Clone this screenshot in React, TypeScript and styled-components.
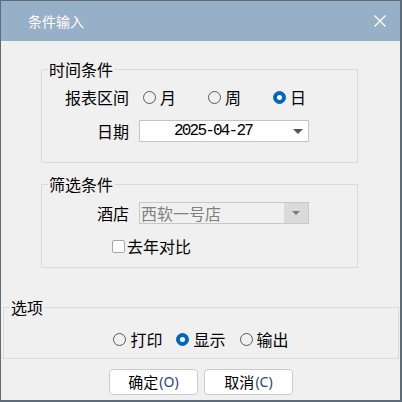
import React from 'react';
import styled, { createGlobalStyle } from 'styled-components';

const Global = createGlobalStyle`
  html, body { margin: 0; padding: 0; background: #f0f0f0; }
  body { font-family: "Noto Sans CJK SC", "Noto Sans", sans-serif; color: #000; }
  * { box-sizing: border-box; }
`;

const Window = styled.div`
  width: 402px;
  height: 402px;
  border-style: solid;
  border-color: #5e6b79;
  border-width: 1px 2px 2px 1px;
  background: #f0f0f0;
  display: flex;
  flex-direction: column;
`;

const TitleBar = styled.div`
  height: 40px;
  flex: none;
  background: #98afc8;
  display: flex;
  align-items: center;
  justify-content: space-between;
  padding: 0 14px 0 27px;
  color: #fff;
  font-size: 14px;
  line-height: 16px;
`;

const Body = styled.div`
  flex: 1;
  display: flex;
  flex-direction: column;
  padding-top: 28px;
`;

const Group = styled.div<{ $left: number; $width: number; $mt: number; $pt: number; $pb: number; $gap: number }>`
  position: relative;
  margin-left: ${(p) => p.$left}px;
  margin-top: ${(p) => p.$mt}px;
  width: ${(p) => p.$width}px;
  border: 1px solid #dadada;
  padding: ${(p) => p.$pt}px 0 ${(p) => p.$pb}px 0;
  display: flex;
  flex-direction: column;
  gap: ${(p) => p.$gap}px;
`;

const Legend = styled.span`
  position: absolute;
  top: -9px;
  left: 6px;
  padding: 0 1px;
  background: #f0f0f0;
  font-size: 16px;
  line-height: 16px;
`;

const FormRow = styled.div`
  display: grid;
  grid-template-columns: 87px auto;
  column-gap: 10px;
  align-items: center;
  height: 22px;
`;

const Label = styled.span`
  text-align: right;
  font-size: 16px;
  line-height: 22px;
`;

const RadioSet = styled.div<{ $center?: boolean; $gap: number }>`
  display: flex;
  align-items: center;
  justify-content: ${(p) => (p.$center ? 'center' : 'flex-start')};
  gap: ${(p) => p.$gap}px;
  height: 22px;
  padding-left: ${(p) => (p.$center ? 0 : 4)}px;
`;

const RadioOption = styled.label<{ $width?: number }>`
  display: flex;
  align-items: center;
  gap: 4px;
  width: ${(p) => (p.$width ? `${p.$width}px` : 'auto')};
  font-size: 16px;
  line-height: 22px;
`;

const RadioDot = styled.span<{ $on?: boolean }>`
  width: 13px;
  height: 13px;
  border-radius: 50%;
  flex: none;
  border: 1px solid ${(p) => (p.$on ? '#0067c0' : '#5a5a5a')};
  background: ${(p) => (p.$on ? '#0067c0' : 'transparent')};
  display: flex;
  align-items: center;
  justify-content: center;
  &::after {
    content: '';
    display: ${(p) => (p.$on ? 'block' : 'none')};
    width: 5px;
    height: 5px;
    border-radius: 50%;
    background: #fff;
  }
`;

const Field = styled.div<{ $disabled?: boolean }>`
  width: 170px;
  height: 22px;
  border: 1px solid ${(p) => (p.$disabled ? '#c8c8c8' : '#c4c4c4')};
  background: ${(p) => (p.$disabled ? '#f0f0f0' : '#fff')};
  display: flex;
  align-items: stretch;
`;

const DateText = styled.span`
  flex: 1;
  text-align: center;
  font-family: "Liberation Mono", "DejaVu Sans Mono", monospace;
  font-size: 16px;
  letter-spacing: -1.8px;
  line-height: 20px;
  color: #000;
`;

const SelectText = styled.span`
  flex: 1;
  padding-left: 1px;
  font-size: 16px;
  line-height: 20px;
  color: #808080;
`;

const ArrowBox = styled.span<{ $disabled?: boolean }>`
  width: ${(p) => (p.$disabled ? 24 : 22)}px;
  flex: none;
  display: flex;
  align-items: center;
  justify-content: center;
  background: ${(p) => (p.$disabled ? '#dadada' : 'transparent')};
  padding-left: ${(p) => (p.$disabled ? 0 : 1)}px;
`;

const Arrow = styled.span<{ $small?: boolean }>`
  width: 0;
  height: 0;
  border-left: ${(p) => (p.$small ? 4 : 5)}px solid transparent;
  border-right: ${(p) => (p.$small ? 4 : 5)}px solid transparent;
  border-top: ${(p) => (p.$small ? 4 : 5)}px solid ${(p) => (p.$small ? '#7a7a7a' : '#555')};
`;

const CheckRow = styled.label`
  display: flex;
  align-items: center;
  gap: 2px;
  height: 22px;
  padding-left: 70px;
  font-size: 16px;
  line-height: 22px;
`;

const CheckBox = styled.span`
  width: 13px;
  height: 13px;
  border: 1px solid #a8a8a8;
  border-radius: 2px;
  background: #fff;
  flex: none;
`;

const ButtonRow = styled.div`
  display: flex;
  justify-content: center;
  gap: 6px;
  margin-top: 10px;
  padding-left: 1px;
`;

const Button = styled.button`
  width: 89px;
  height: 26px;
  border: 1px solid #cccccc;
  border-radius: 4px;
  background: #fff;
  font-family: "Noto Sans CJK SC", "Noto Sans", sans-serif;
  font-size: 15px;
  line-height: 22px;
  color: #000;
  padding: 0;
  display: flex;
  align-items: center;
  justify-content: center;
`;

const Key = styled.span`
  color: #2a3f7a;
  font-family: "Noto Sans", "Noto Sans CJK SC", sans-serif;
  font-size: 14px;
  margin-left: 1px;
`;

const CloseIcon = () => (
  <svg width="12" height="12" viewBox="0 0 12 12">
    <path d="M0.5 0.5 L11.5 11.5 M11.5 0.5 L0.5 11.5" stroke="#fff" strokeWidth="1.3" fill="none" />
  </svg>
);

export default function App() {
  return (
    <>
      <Global />
      <Window>
        <TitleBar>
          <span>条件输入</span>
          <CloseIcon />
        </TitleBar>
        <Body>
          <Group $left={40} $width={317} $mt={0} $pt={16} $pb={20} $gap={12}>
            <Legend>时间条件</Legend>
            <FormRow>
              <Label>报表区间</Label>
              <RadioSet $gap={0}>
                <RadioOption $width={65}>
                  <RadioDot />月
                </RadioOption>
                <RadioOption $width={65}>
                  <RadioDot />周
                </RadioOption>
                <RadioOption $width={65}>
                  <RadioDot $on />日
                </RadioOption>
              </RadioSet>
            </FormRow>
            <FormRow>
              <Label>日期</Label>
              <Field>
                <DateText>2025-04-27</DateText>
                <ArrowBox>
                  <Arrow />
                </ArrowBox>
              </Field>
            </FormRow>
          </Group>
          <Group $left={40} $width={317} $mt={21} $pt={17} $pb={10} $gap={11}>
            <Legend>筛选条件</Legend>
            <FormRow>
              <Label>酒店</Label>
              <Field $disabled>
                <SelectText>西软一号店</SelectText>
                <ArrowBox $disabled>
                  <Arrow $small />
                </ArrowBox>
              </Field>
            </FormRow>
            <CheckRow>
              <CheckBox />
              去年对比
            </CheckRow>
          </Group>
          <Group $left={2} $width={396} $mt={39} $pt={20} $pb={8} $gap={0}>
            <Legend>选项</Legend>
            <RadioSet $center $gap={14}>
              <RadioOption>
                <RadioDot />打印
              </RadioOption>
              <RadioOption>
                <RadioDot $on />显示
              </RadioOption>
              <RadioOption>
                <RadioDot />输出
              </RadioOption>
            </RadioSet>
          </Group>
          <ButtonRow>
            <Button>
              确定<Key>(O)</Key>
            </Button>
            <Button>
              取消<Key>(C)</Key>
            </Button>
          </ButtonRow>
        </Body>
      </Window>
    </>
  );
}
